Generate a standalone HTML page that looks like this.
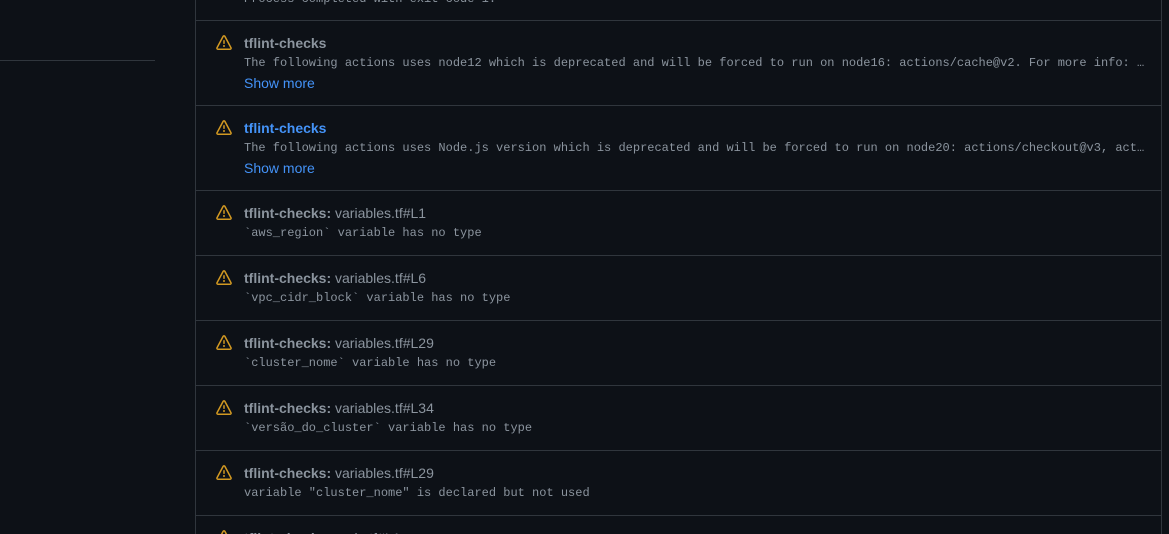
<!DOCTYPE html>
<html><head><meta charset="utf-8"><style>
html,body{margin:0;width:1169px;height:534px;overflow:hidden}
body{background:#0d1117;position:relative;font-family:"Liberation Sans",sans-serif}
.side{position:absolute;left:0;top:60px;width:155px;height:1px;background:#30363d}
.box{position:absolute;left:195px;top:-10px;width:965px;height:560px;border-left:1px solid #30363d;border-right:1px solid #30363d}
.hl{position:absolute;left:196px;width:965px;height:1px;background:#30363d}
.ic{position:absolute;left:216px;width:16px;height:16px}
.t{position:absolute;left:244px;font-size:14px;color:#8b949e;white-space:nowrap;line-height:18px}
.t b{color:#8b949e}
.t.blue b{color:#4493f8}
.m{position:absolute;left:244px;font-family:"Liberation Mono",monospace;font-size:12px;color:#8b949e;white-space:nowrap;line-height:16px;width:901px;overflow:hidden;text-overflow:ellipsis}
.s{position:absolute;left:244px;font-size:14px;color:#4493f8;line-height:18px}
</style></head><body>
<div class="side"></div>
<div class="box"></div>
<svg width="0" height="0" style="position:absolute"><defs><symbol id="w" viewBox="0 0 16 16"><path fill="#d29922" d="M6.457 1.047c.659-1.234 2.427-1.234 3.086 0l6.082 11.378A1.75 1.75 0 0 1 14.082 15H1.918a1.75 1.75 0 0 1-1.543-2.575Zm1.763.707a.25.25 0 0 0-.44 0L1.698 13.132a.25.25 0 0 0 .22.368h12.164a.25.25 0 0 0 .22-.368Zm.53 3.996v2.5a.75.75 0 0 1-1.5 0v-2.5a.75.75 0 0 1 1.5 0ZM9 11a1 1 0 1 1-2 0 1 1 0 0 1 2 0Z"/></symbol></defs></svg>
<div class="m" style="top:-9px">Process completed with exit code 1.</div>
<div class="hl" style="top:20px"></div>
<svg class="ic" style="top:35px"><use href="#w"/></svg>
<div class="t" style="top:34px"><b>tflint-checks</b></div>
<div class="m" style="top:55px">The following actions uses node12 which is deprecated and will be forced to run on node16: actions/cache@v2. For more info: https://github.blog/changelog/</div>
<div class="s" style="top:74px">Show more</div>
<div class="hl" style="top:105px"></div>
<svg class="ic" style="top:120px"><use href="#w"/></svg>
<div class="t blue" style="top:119px"><b>tflint-checks</b></div>
<div class="m" style="top:140px">The following actions uses Node.js version which is deprecated and will be forced to run on node20: actions/checkout@v3, actions/cache@v3</div>
<div class="s" style="top:159px">Show more</div>
<div class="hl" style="top:190px"></div>
<svg class="ic" style="top:205px"><use href="#w"/></svg>
<div class="t" style="top:204px"><b>tflint-checks:</b> variables.tf#L1</div>
<div class="m" style="top:225px">`aws_region` variable has no type</div>
<div class="hl" style="top:255px"></div>
<svg class="ic" style="top:270px"><use href="#w"/></svg>
<div class="t" style="top:269px"><b>tflint-checks:</b> variables.tf#L6</div>
<div class="m" style="top:290px">`vpc_cidr_block` variable has no type</div>
<div class="hl" style="top:320px"></div>
<svg class="ic" style="top:335px"><use href="#w"/></svg>
<div class="t" style="top:334px"><b>tflint-checks:</b> variables.tf#L29</div>
<div class="m" style="top:355px">`cluster_nome` variable has no type</div>
<div class="hl" style="top:385px"></div>
<svg class="ic" style="top:400px"><use href="#w"/></svg>
<div class="t" style="top:399px"><b>tflint-checks:</b> variables.tf#L34</div>
<div class="m" style="top:420px">`versão_do_cluster` variable has no type</div>
<div class="hl" style="top:450px"></div>
<svg class="ic" style="top:465px"><use href="#w"/></svg>
<div class="t" style="top:464px"><b>tflint-checks:</b> variables.tf#L29</div>
<div class="m" style="top:485px">variable "cluster_nome" is declared but not used</div>
<div class="hl" style="top:515px"></div>
<svg class="ic" style="top:530px"><use href="#w"/></svg>
<div class="t" style="top:529px"><b>tflint-checks:</b> main.tf#L1</div>
</body></html>
